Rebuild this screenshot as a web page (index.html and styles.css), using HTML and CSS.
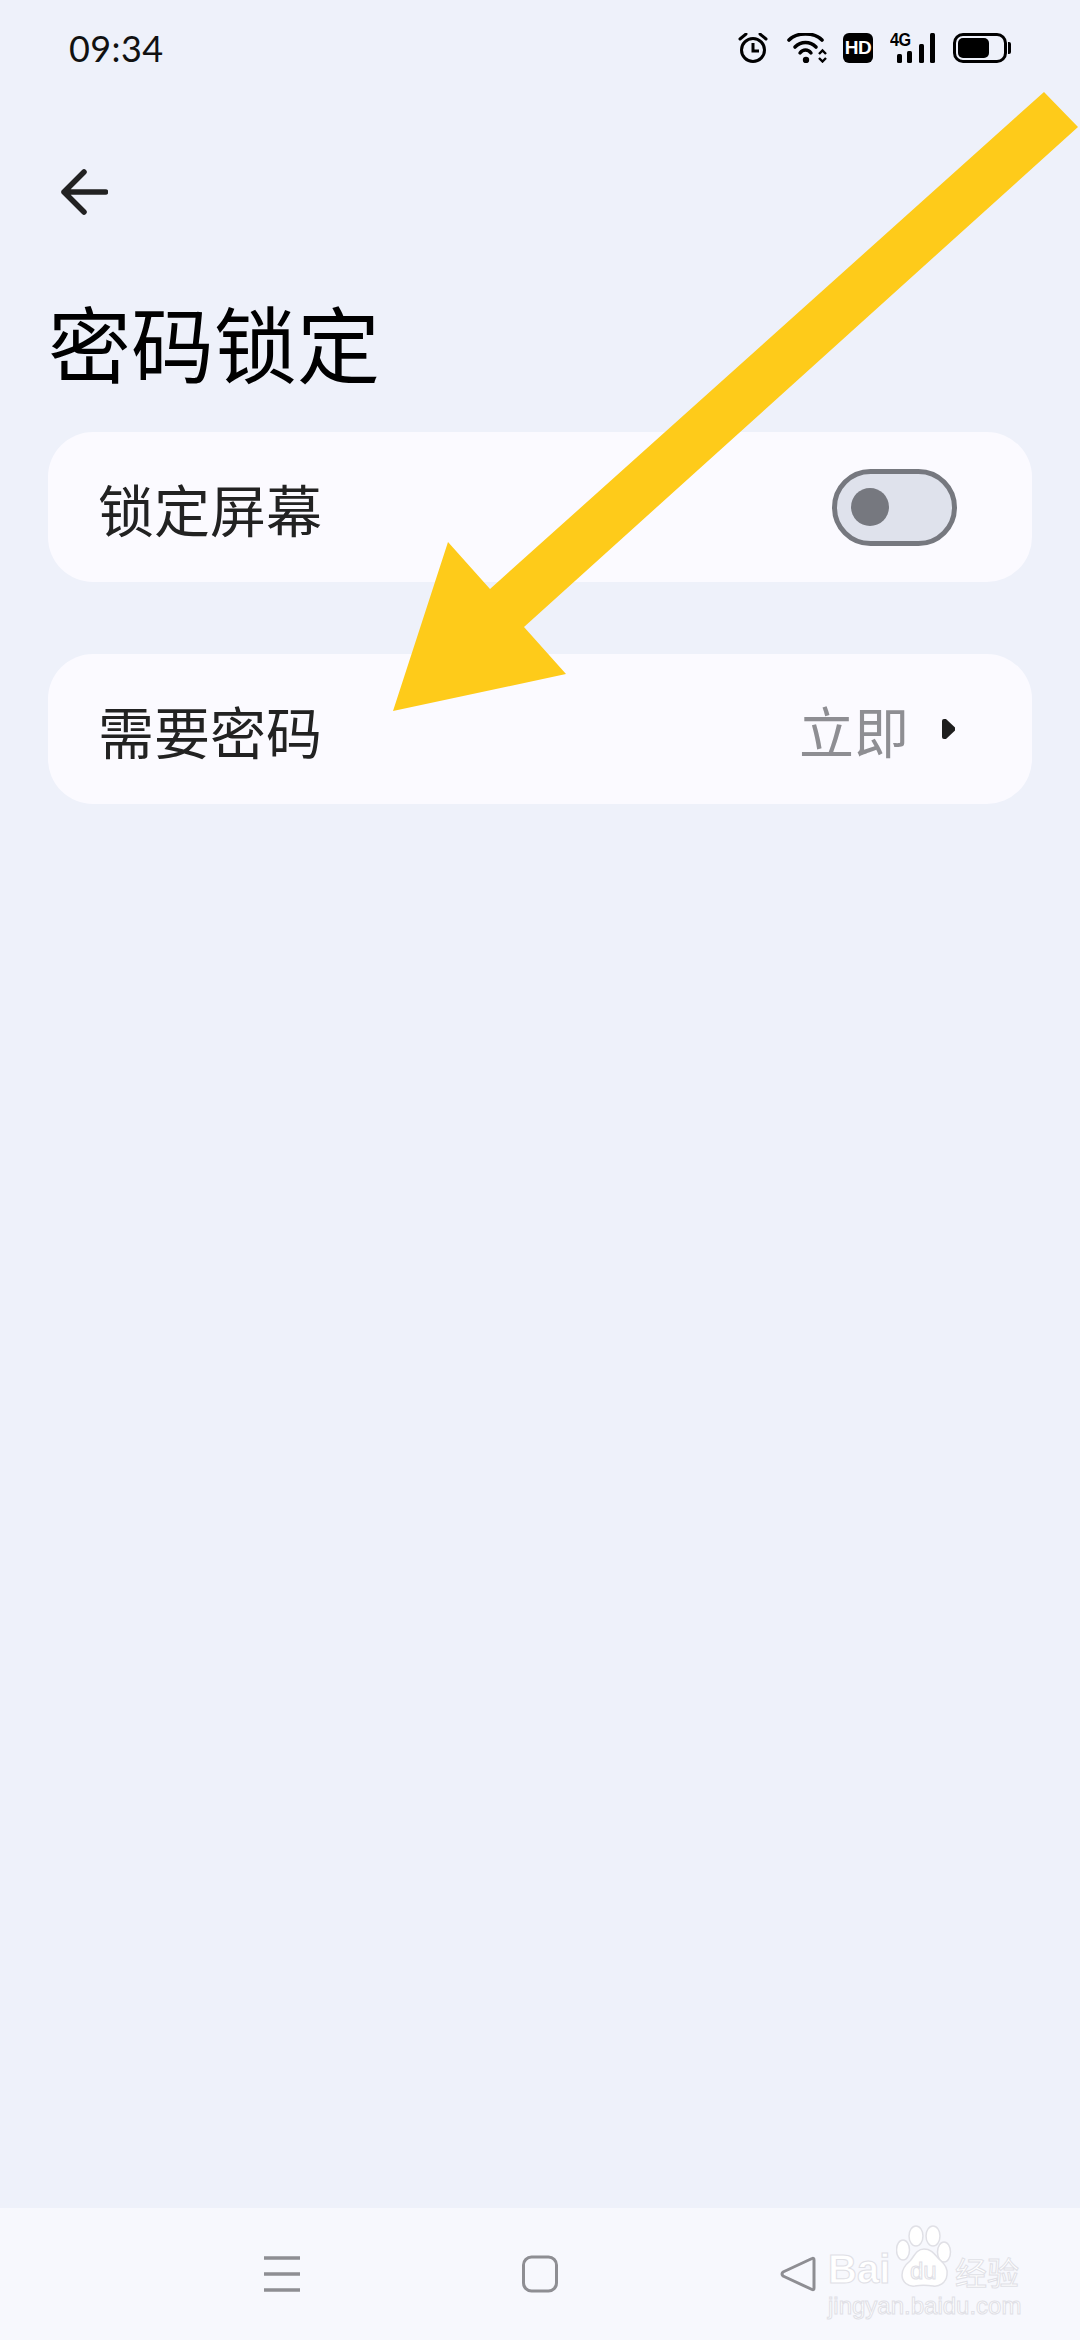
FILE: index.html
```html
<!DOCTYPE html>
<html lang="zh-CN">
<head>
    <meta charset="UTF-8">
    <meta name="viewport" content="width=device-width, initial-scale=1.0">
    <title>密码锁定</title>
    <link rel="stylesheet" href="styles.css">
</head>
<body>

<div class="page">
    <div class="status-bar">
        <span class="time">09:34</span>
        <div class="status-icons">
            <svg width="30" height="30" viewBox="0 0 30 30" class="ic-alarm">
                <circle cx="15" cy="17" r="11.500" fill="none" stroke="#000" stroke-width="3"/>
                <path d="M15 10v8h6" fill="none" stroke="#000" stroke-width="3"/>
                <path d="M2 6l6-5M28 6l-6-5" fill="none" stroke="#000" stroke-width="3" stroke-linecap="round"/>
            </svg>
            <svg width="40" height="30" viewBox="0 0 40 30" class="ic-wifi">
                <path d="M2 7C10-1 27-1 35 7" fill="none" stroke="#000" stroke-width="3.600" stroke-linecap="round"/>
                <path d="M8 14C14 8 23 8 29 14" fill="none" stroke="#000" stroke-width="3.600" stroke-linecap="round"/>
                <path d="M13 20C16 16 21 16 24 20" fill="none" stroke="#000" stroke-width="3.400" stroke-linecap="round"/>
                <circle cx="19" cy="27" r="3.200" fill="#000"/>
                <path d="M32 21l3.500-3.500 3.500 3.500M32 25l3.500 3.500 3.500-3.500" fill="none" stroke="#000" stroke-width="2.400"/>
            </svg>
            <div class="ic-hd">HD</div>
            <div class="ic-signal">
                <span class="net">4G</span>
                <svg width="44" height="30" viewBox="0 0 44 30">
                    <rect x="6" y="21" width="5" height="9" rx="1.500"/>
                    <rect x="16" y="18" width="5" height="12" rx="1.500"/>
                    <rect x="28" y="11" width="5" height="19" rx="1.500"/>
                    <rect x="39" y="0" width="5" height="30" rx="1.500"/>
                </svg>
            </div>
            <div class="ic-battery">
                <div class="battery-body"><div class="battery-level"></div></div>
                <div class="battery-nub"></div>
            </div>
        </div>
    </div>

    <div class="toolbar">
        <svg width="48" height="48" viewBox="0 0 48 48">
            <path d="M45.500 24H4M24 4L4 24l20 20" fill="none" stroke="#222" stroke-width="5.500" stroke-linecap="round" stroke-linejoin="round"/>
        </svg>
    </div>

    <h1 class="title">密码锁定</h1>

    <div class="row row-first">
        <span class="row-label">锁定屏幕</span>
        <div class="toggle"><div class="toggle-knob"></div></div>
    </div>

    <div class="row">
        <span class="row-label">需要密码</span>
        <div class="row-right">
            <span class="row-value">立即</span>
            <svg width="16" height="24" viewBox="0 0 16 24">
                <path d="M3 2h2l9 8.500v3L5 22H3a2 2 0 0 1-2-2V4a2 2 0 0 1 2-2z" fill="#1e1e1e"/>
            </svg>
        </div>
    </div>

    <div class="nav-bar">
        <svg width="36" height="38" viewBox="0 0 36 38">
            <path d="M0 3h36M0 19h36M0 35h36" stroke="#8e8e93" stroke-width="3.400"/>
        </svg>
        <svg width="36" height="38" viewBox="0 0 36 38">
            <rect x="1.500" y="2" width="33" height="34" rx="8" fill="none" stroke="#8e8e93" stroke-width="3"/>
        </svg>
        <svg width="36" height="38" viewBox="0 0 36 38">
            <path d="M32 3.500Q34 2.500 34 5V33Q34 35.500 32 34.500L3 21Q1 19 3 17z" fill="none" stroke="#8e8e93" stroke-width="3" stroke-linejoin="round"/>
        </svg>
    </div>

    <svg class="big-arrow" width="1080" height="800" viewBox="0 0 1080 800">
        <polygon points="1044,92 1078,127 524,627 566,674 393,711 448,542 490,589" fill="#fecb1a"/>
    </svg>

    <div class="watermark">
        <svg class="wm-paw" width="60" height="66" viewBox="0 0 60 66">
            <g fill="#fff" stroke="#e0e0e6" stroke-width="1.500">
                <ellipse cx="7" cy="25" rx="6.500" ry="10"/>
                <ellipse cx="20" cy="11" rx="7" ry="10"/>
                <ellipse cx="37" cy="11" rx="7" ry="10"/>
                <ellipse cx="48" cy="27" rx="6.500" ry="10"/>
                <path d="M28 24c8 0 11 6 16 11 6 5 8 10 7 15-1 8-8 12-14 11-6-1-13-1-18 0-7 1-13-4-13-11 0-6 3-10 8-14 4-4 6-12 14-12z"/>
            </g>
        </svg>
        <span class="wm-bai">Bai</span>
        <span class="wm-du">du</span>
        <span class="wm-jy">经验</span>
        <span class="wm-url">jingyan.baidu.com</span>
    </div>
</div>

</body>
</html>
```

FILE: styles.css
```css
html, body {
    margin: 0;
    padding: 0;
}
body {
    font-family: "Noto Sans CJK SC", Roboto, sans-serif;
    background-color: #eef1fa;
}
.page {
    position: relative;
    width: 1080px;
    height: 2340px;
    display: flex;
    flex-direction: column;
    overflow: hidden;
}
.status-bar {
    height: 96px;
    display: flex;
    align-items: center;
    justify-content: space-between;
    padding: 0 69px 0 69px;
}
.time {
    font-family: Lato, Roboto, sans-serif;
    font-size: 36px;
    letter-spacing: 0.400px;
    color: #111;
}
.status-icons {
    display: flex;
    align-items: center;
    gap: 18px;
}
.ic-alarm {
    margin-right: 1px;
}
.ic-wifi {
    margin-right: -2px;
}
.ic-hd {
    width: 30px;
    height: 30px;
    border-radius: 6px;
    background-color: #000;
    color: #fff;
    font-family: "Liberation Sans", sans-serif;
    font-weight: bold;
    font-size: 19px;
    line-height: 30px;
    text-align: center;
    letter-spacing: -0.500px;
}
.ic-signal {
    position: relative;
    width: 44px;
    height: 30px;
    display: flex;
}
.net {
    position: absolute;
    left: -1px;
    top: -1px;
    font-family: "Liberation Sans", sans-serif;
    font-weight: bold;
    font-size: 18px;
    line-height: 16px;
    letter-spacing: -0.500px;
    transform: scaleX(0.900);
    transform-origin: left top;
}
.ic-battery {
    display: flex;
    align-items: center;
    gap: 1px;
}
.battery-body {
    width: 54px;
    height: 30px;
    box-sizing: border-box;
    border: 3px solid #000;
    border-radius: 10px;
    padding: 2px;
    display: flex;
}
.battery-level {
    width: 31px;
    background-color: #000;
    border-radius: 5px;
}
.battery-nub {
    width: 3px;
    height: 12px;
    background-color: #000;
    border-radius: 0 2px 2px 0;
}
.toolbar {
    height: 192px;
    display: flex;
    align-items: center;
    padding-left: 60px;
}
.title {
    margin: 0 0 38px 0;
    padding-left: 48px;
    height: 106px;
    line-height: 106px;
    font-size: 83px;
    font-weight: 400;
    color: #000;
}
.row {
    height: 150px;
    margin: 0 48px 72px 48px;
    padding: 0 75px 0 50px;
    box-sizing: border-box;
    display: flex;
    align-items: center;
    justify-content: space-between;
    background-color: #fbfaff;
    border-radius: 45px;
}
.row-label {
    font-size: 56px;
    color: #222;
}
.row-right {
    display: flex;
    align-items: center;
    gap: 32px;
}
.row-value {
    font-size: 55px;
    color: #8e8e93;
}
.toggle {
    width: 125px;
    height: 77px;
    box-sizing: border-box;
    border: 5px solid #76787f;
    border-radius: 39px;
    background-color: #dfe2ec;
    display: flex;
    align-items: center;
    padding-left: 14px;
}
.toggle-knob {
    width: 38px;
    height: 38px;
    border-radius: 50%;
    background-color: #76787f;
}
.nav-bar {
    margin-top: auto;
    height: 132px;
    display: flex;
    align-items: center;
    gap: 222px;
    padding-left: 264px;
    background-color: #f7f8fd;
}
.big-arrow {
    position: absolute;
    left: 0;
    top: 0;
}
.watermark {
    position: absolute;
    left: 828px;
    top: 2225px;
    width: 200px;
    height: 95px;
}
.watermark span {
    position: absolute;
    color: #fff;
    -webkit-text-stroke: 1px #e0e0e6;
    white-space: nowrap;
}
.wm-paw {
    position: absolute;
    left: 68px;
    top: 0;
}
.wm-bai {
    left: 0;
    top: 22px;
    font-family: "Liberation Sans", sans-serif;
    font-weight: bold;
    font-size: 40px;
    line-height: 44px;
}
.wm-du {
    left: 82px;
    top: 33px;
    font-family: "Liberation Sans", sans-serif;
    font-size: 24px;
    line-height: 26px;
}
.wm-jy {
    left: 127px;
    top: 24px;
    font-size: 32px;
    line-height: 44px;
}
.wm-url {
    left: 0;
    top: 66px;
    font-family: "Liberation Sans", sans-serif;
    font-size: 24px;
    line-height: 30px;
}
```
